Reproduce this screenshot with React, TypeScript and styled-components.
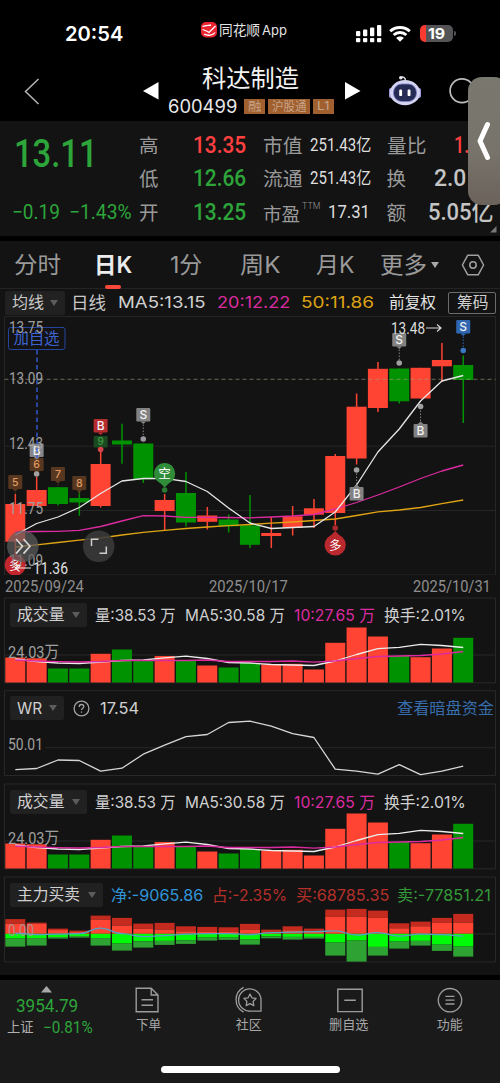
import React, { useLayoutEffect, useRef, useState } from "react";
import styled, { createGlobalStyle } from "styled-components";

const UI = `Inter, "Noto Sans CJK SC", sans-serif`;
const DIN = `Roboto, "Noto Sans CJK SC", sans-serif`;

const RED = "#ff4433";
const GREEN = "#009200";
const MAGENTA = "#dc2ba0";
const YELLOW = "#dfa413";
const DOWN = "#2da53a";

const GlobalStyle = createGlobalStyle`
  * { box-sizing: border-box; }
  body { margin: 0; background: #000; font-family: ${UI}; }
`;

/* ---------- text fitted to a column width ---------- */

type TextStyle = { $size: number; $color?: string; $weight?: number; $din?: boolean };

const FitBox = styled.span<{ $w: number; $ml?: number; $dy?: number }>`
  flex: none;
  display: block;
  line-height: 0;
  width: ${(p) => p.$w}px;
  margin-left: ${(p) => p.$ml ?? 0}px;
  margin-top: ${(p) => p.$dy ?? 1.5}px;
`;

const FitInner = styled.span<TextStyle>`
  display: inline-block;
  vertical-align: top;
  white-space: nowrap;
  line-height: 1.2;
  transform-origin: 0 50%;
  font-family: ${(p) => (p.$din ? DIN : UI)};
  font-size: ${(p) => p.$size}px;
  font-weight: ${(p) => p.$weight ?? 400};
  color: ${(p) => p.$color ?? "#d0d0d0"};
`;

type FitProps = {
  w: number;
  size: number;
  ml?: number;
  dy?: number;
  color?: string;
  weight?: number;
  din?: boolean;
  children: React.ReactNode;
};

function Fit({ w, size, ml, dy, color, weight, din, children }: FitProps) {
  const ref = useRef<HTMLSpanElement>(null);
  const [scale, setScale] = useState(1);
  useLayoutEffect(() => {
    if (ref.current && ref.current.offsetWidth) {
      setScale(w / ref.current.offsetWidth);
    }
  }, [w, size, children]);
  return (
    <FitBox $w={w} $ml={ml} $dy={dy}>
      <FitInner
        ref={ref}
        $size={size}
        $color={color}
        $weight={weight}
        $din={din}
        style={{ transform: `scaleX(${scale})` }}
      >
        {children}
      </FitInner>
    </FitBox>
  );
}

/* ---------- page parts ---------- */

const Screen = styled.div`
  position: relative;
  width: 500px;
  height: 1083px;
  overflow: hidden;
  display: flex;
  flex-direction: column;
  background: #000;
`;

const StatusBar = styled.header`
  flex: none;
  height: 60px;
  display: flex;
  align-items: flex-start;
  padding-top: 20px;
`;

const Glyph = styled.svg<{ $ml?: number; $mt?: number }>`
  flex: none;
  display: block;
  margin-left: ${(p) => p.$ml ?? 0}px;
  margin-top: ${(p) => p.$mt ?? 0}px;
`;

const Battery = styled.div`
  flex: none;
  width: 33px;
  height: 17px;
  margin: 5px 0 0 9px;
  border-radius: 5px;
  background: linear-gradient(90deg, #fb3a30 0 6.5px, #545456 6.5px);
  display: flex;
  align-items: center;
  position: relative;
  &::after {
    content: "";
    position: absolute;
    right: -3px;
    top: 6px;
    width: 2px;
    height: 5px;
    border-radius: 0 2px 2px 0;
    background: #545456;
  }
`;

const TitleBar = styled.div`
  flex: none;
  height: 61px;
  display: flex;
  align-items: flex-start;
`;

const TitleBlock = styled.div`
  flex: none;
  width: 168px;
  margin-left: 9px;
  display: flex;
  flex-direction: column;
`;

const CodeLine = styled.div`
  display: flex;
  align-items: center;
  height: 21px;
  margin-top: 3px;
`;

const Tag = styled.span<{ $ml: number }>`
  flex: none;
  height: 15px;
  margin-left: ${(p) => p.$ml}px;
  padding: 0 4px;
  background: #a05f2e;
  display: flex;
  align-items: center;
`;

const Quote = styled.section`
  flex: none;
  height: 115px;
  background: #131313;
  display: flex;
  padding-top: 7.5px;
`;

const PriceBlock = styled.div`
  flex: none;
  width: 139px;
  display: flex;
  flex-direction: column;
`;

const Row = styled.div<{ $h: number }>`
  flex: none;
  height: ${(p) => p.$h}px;
  display: flex;
  align-items: center;
`;

const QuoteColumn = styled.div<{ $w: number }>`
  flex: none;
  width: ${(p) => p.$w}px;
  display: flex;
  flex-direction: column;
`;

const QuoteCell = styled.div`
  height: 33.6px;
  display: flex;
  align-items: center;
`;

const Ttm = styled.span`
  width: 17px;
  margin: -13px 0 0 2px;
  font: 300 8.5px ${UI};
  color: #8e8e8e;
`;

const Tabs = styled.nav`
  flex: none;
  margin-top: 5px;
  height: 48px;
  background: #131313;
  border-bottom: 1px solid #242424;
  display: flex;
  align-items: center;
`;

const ActiveTab = styled.div`
  flex: none;
  height: 48px;
  margin-left: 33px;
  display: flex;
  flex-direction: column;
  align-items: center;
  justify-content: space-between;
  padding-top: 11px;
  &::after {
    content: "";
    width: 16px;
    height: 4px;
    border-radius: 2px;
    background: #f6493b;
  }
`;

const IndicatorRow = styled.div`
  flex: none;
  height: 27px;
  padding-left: 4.5px;
  background: #131313;
  display: flex;
  align-items: center;
`;

const Drop = styled.div<{ $w: number }>`
  flex: none;
  width: ${(p) => p.$w}px;
  height: 24px;
  padding: 0 7px;
  background: #212121;
  border-radius: 2px;
  display: flex;
  align-items: center;
  justify-content: space-between;
`;

const Caret = styled.i<{ $c?: string; $ml?: number }>`
  flex: none;
  margin-left: ${(p) => p.$ml ?? 0}px;
  border: 4px solid transparent;
  border-top: 6px solid ${(p) => p.$c ?? "#5c5c5c"};
  border-bottom: 0;
`;

const ChipButton = styled.div`
  flex: none;
  width: 48px;
  height: 22px;
  margin-left: 11px;
  border: 1px solid #6b6b6b;
  border-radius: 2px;
  display: flex;
  align-items: center;
  padding-left: 8px;
`;

const ChartArea = styled.div`
  flex: none;
  height: 259px;
  background: #131313;
`;

const Plot = styled.svg`
  display: block;
  overflow: visible;
`;

const Dates = styled.div`
  flex: none;
  height: 21.5px;
  padding: 0 9.5px 0 5px;
  background: #131313;
  display: flex;
  align-items: center;
  justify-content: space-between;
`;

const Panels = styled.div`
  flex: none;
  height: 378px;
  background: #131313;
  display: flex;
  flex-direction: column;
  gap: 7.3px;
`;

const Panel = styled.section`
  flex: none;
  height: 86px;
  display: grid;
  > * {
    grid-area: 1 / 1;
  }
`;

const PanelHead = styled.div`
  height: 37px;
  padding-left: 10px;
  display: flex;
  align-items: center;
`;

const BottomBar = styled.footer`
  flex: none;
  height: 104px;
  margin-top: 5px;
  background: #1a1a1a;
  display: flex;
  flex-direction: column;
  align-items: center;
  justify-content: space-between;
  padding-bottom: 11px;
`;

const BottomItems = styled.div`
  width: 500px;
  display: flex;
`;

const IndexBlock = styled.div`
  flex: none;
  width: 98px;
  padding-top: 6px;
`;

const NavItem = styled.div`
  flex: none;
  width: 100.5px;
  padding-top: 6px;
  display: flex;
  flex-direction: column;
  align-items: center;
  gap: 3px;
`;

const HomeBar = styled.div`
  width: 179px;
  height: 7px;
  border-radius: 4px;
  background: #fff;
`;

const SideHandle = styled.div`
  position: absolute;
  left: 468px;
  top: 77px;
  width: 40px;
  height: 128px;
  border-radius: 14px;
  background: linear-gradient(#79786f, #77736a 60%, #6b625b);
  display: flex;
  align-items: center;
  padding-left: 8px;
`;

/* ---------- chart data ---------- */

const X0 = 15.3;
const STEP = 21.33;
const cx = (i: number) => X0 + STEP * i;

// [rising, body top, body bottom, high, low]
const candles: [number, number, number, number, number][] = [
  [1, 504, 541.7, 494, 560],
  [1, 490, 506, 477, 506],
  [0, 487.2, 504, 487, 505.5],
  [0, 498, 502.5, 492, 515.7],
  [1, 464, 506, 452, 507.5],
  [0, 440.5, 444.5, 423.7, 463.7],
  [0, 443.5, 479.3, 443.5, 483],
  [1, 500, 511, 494, 530],
  [0, 493, 522.5, 472, 526.5],
  [1, 515.5, 521.8, 507, 529.5],
  [0, 519.5, 526.3, 514.5, 532.5],
  [0, 525.3, 544.8, 495, 548],
  [1, 533, 536, 517, 548],
  [1, 516.3, 527.7, 506, 535.5],
  [1, 508.3, 514.7, 499, 528],
  [1, 456, 513, 454, 525],
  [1, 406.7, 458.5, 393.5, 464.5],
  [1, 368.8, 408, 362, 412],
  [0, 368.5, 401.3, 368.5, 403.5],
  [1, 367.8, 398.5, 367.8, 398.5],
  [1, 360, 366.3, 343, 382],
  [0, 365, 380, 355.5, 423],
];

const ma5 = [535, 523.5, 517, 507.5, 493.5, 481, 478.5, 478.3, 481.5, 491.5, 508, 523, 528.5, 527.5, 526.5, 512, 485, 452, 429, 401, 381, 375.5];
const ma20 = [532, 531.5, 531.3, 530.3, 526.5, 521, 515.6, 516, 517.3, 517.3, 517.5, 517.8, 517, 516, 514.5, 509, 502.5, 495, 487, 478.5, 471, 465];
const ma50 = [547, 544.8, 542.5, 540.2, 538, 535, 532.3, 530.3, 528.5, 527, 525.7, 524.5, 523.2, 522, 520.5, 519, 515.5, 511.8, 510, 507.5, 503.7, 500];

const volTop = [657, 657.8, 668, 668, 653.3, 649, 660, 655.5, 660.3, 665, 667, 662.5, 664, 663.3, 669, 642.3, 627, 636, 655.5, 656.7, 648, 637.3];
const volUp = [1, 1, 0, 0, 1, 0, 0, 1, 0, 1, 0, 0, 1, 1, 1, 1, 1, 1, 0, 1, 1, 0];
const volMa5 = [658.5, 661, 662.5, 663, 661.7, 660, 659.5, 657.3, 655.7, 658, 662, 662.5, 664, 664.5, 665, 660.5, 654, 648.2, 646.8, 643.8, 645, 647];
const volMa10 = [659.5, 660.5, 661.2, 661.5, 661, 660, 660, 660, 660, 659.5, 661, 661, 661, 660.5, 661.7, 660.5, 658, 656, 655.5, 655, 653.5, 651];
const wr = [769.5, 768.3, 759.8, 760.3, 771, 768, 754, 745, 736.5, 734.3, 722.3, 721, 726, 733.5, 737.3, 769, 771, 774, 764.5, 774.5, 771, 766];

// [dark red top, red top, bright green end, dark green end] around y = 934.3
const flow: [number, number, number, number][] = [
  [919.5, 924, 939, 947],
  [923, 924, 938.5, 946],
  [929, 930.5, 937.5, 939],
  [931, 932.5, 936.5, 938],
  [916, 920, 938.5, 946],
  [918.3, 926, 944, 951],
  [924, 929, 941.7, 948],
  [923.3, 930, 941.3, 945.3],
  [926.7, 931.7, 940.7, 944.3],
  [927.3, 932.3, 938, 941],
  [927.7, 932.3, 938, 940.3],
  [924.3, 930, 940, 945],
  [930, 932.7, 936.7, 938.7],
  [926.7, 930.7, 937.3, 940],
  [929, 931, 937.3, 939],
  [910, 917.3, 943, 956],
  [909.3, 917, 941, 962],
  [911, 918.3, 947.3, 956],
  [923.7, 928.7, 942, 949],
  [922, 926.7, 941.3, 946],
  [918.3, 923.3, 945, 951.3],
  [914.3, 923, 947, 957],
];
const net = [933.5, 935, 934.5, 934, 928.5, 934, 937, 936, 934.5, 934, 934, 935, 933, 932.5, 932, 931.3, 935.5, 933, 936.5, 934.5, 935, 936.5];

const pts = (v: number[]) => v.map((y, i) => `${cx(i)},${y}`).join(" ");

function smooth(v: number[]) {
  let d = `M${cx(0)},${v[0]}`;
  for (let i = 1; i < v.length; i++) {
    const m = (cx(i - 1) + cx(i)) / 2;
    d += ` C${m},${v[i - 1]} ${m},${v[i]} ${cx(i)},${v[i]}`;
  }
  return d;
}

type LabelProps = { x: number; y: number; w: number; size?: number; fill?: string; children: string };
const Label = ({ x, y, w, size = 16.5, fill = "#9f9f9f", children }: LabelProps) => (
  <text x={x} y={y} textLength={w} lengthAdjust="spacingAndGlyphs" fontFamily={DIN} fontSize={size} fill={fill}>
    {children}
  </text>
);

const Line = ({ v, c }: { v: number[]; c: string }) => (
  <polyline points={pts(v)} fill="none" stroke={c} strokeWidth="1.3" strokeLinejoin="round" />
);

type FlagProps = { i: number; y: number; dot: number; bg: string; t: string; color?: string; h?: number; size?: number };
function Flag({ i, y, dot, bg, t, color = "#f0f0f0", h = 13.5, size = 12 }: FlagProps) {
  const x = cx(i);
  const below = dot < y;
  const edge = below ? y : y + h;
  const tip = below ? y - 2.5 : y + h + 2.5;
  return (
    <g>
      <line x1={x} x2={x} y1={edge} y2={dot} stroke={bg} strokeDasharray="1.5 1.5" />
      <rect x={x - 7} y={y} width="14" height={h} rx="1" fill={bg} />
      <path d={`M${x - 3} ${edge}H${x + 3}L${x} ${tip}Z`} fill={bg} />
      <text x={x} y={y + h / 2 + size * 0.36} textAnchor="middle" fontFamily={UI} fontSize={size} fontWeight="500" fill={color}>
        {t}
      </text>
    </g>
  );
}

function Pin({ x, y, up, bg, t }: { x: number; y: number; up: boolean; bg: string; t: string }) {
  const s = up ? -1 : 1;
  return (
    <g>
      <path d={`M${x - 7} ${y + 7 * s}L${x} ${y + 14 * s}L${x + 7} ${y + 7 * s}Z`} fill={bg} />
      <circle cx={x} cy={y} r="10.6" fill={bg} />
      <text x={x} y={y + 4.6} textAnchor="middle" fontFamily={UI} fontSize="12.5" fill="#fff">
        {t}
      </text>
    </g>
  );
}

const Dot = ({ x, y, c, r = 2.8 }: { x: number; y: number; c: string; r?: number }) => <circle cx={x} cy={y} r={r} fill={c} />;

function KChart() {
  return (
    <Plot width="500" height="259" viewBox="0 316 500 259">
      <g stroke="#262626" fill="none">
        <path d="M4.5 316.5H495.5V575H4.5Z M4.5 446.2H495.5 M4.5 510.5H495.5" />
      </g>
      {candles.map(([up, t, b, h, l], i) => (
        <g key={i} fill={up ? RED : GREEN}>
          <rect x={cx(i) - 0.7} y={h} width="1.5" height={l - h} />
          <rect x={cx(i) - 10} y={t} width="20" height={b - t} />
        </g>
      ))}
      <line x1="4.5" x2="495.5" y1="379.3" y2="379.3" stroke="#a39a80" strokeOpacity="0.62" strokeDasharray="4 3" />
      <Line v={ma50} c={YELLOW} />
      <Line v={ma20} c={MAGENTA} />
      <Line v={ma5} c="#e6e6e6" />

      <rect x="8.5" y="327.5" width="56.5" height="22" rx="2" fill="#131313" stroke="#27449c" />
      <text x="13.5" y="344.3" textLength="46" fontFamily={UI} fontSize="15.5" fill="#3d62d0">加自选</text>

      <Flag i={0} y={475} dot={494} bg="#57371f" t="5" color="#e09a60" h={14} size={10.5} />
      <Flag i={2} y={467} dot={486} bg="#57371f" t="7" color="#e09a60" h={14} size={10.5} />
      <Flag i={3} y={476} dot={495} bg="#57371f" t="8" color="#e09a60" h={14} size={10.5} />
      <Flag i={1} y={458} dot={474} bg="#57371f" t="6" color="#e09a60" h={13} size={10.5} />
      <Flag i={1} y={443.5} dot={458} bg="#85878c" t="B" />
      <Dot x={cx(1)} y={474} c="#a5a0a0" />
      <line x1="37" x2="37" y1="350" y2="458" stroke="#3763e8" strokeWidth="1.3" strokeDasharray="4.5 3" />
      <Flag i={4} y={436} dot={449.5} bg="#1c4a20" t="9" color="#3f9a45" h={11.5} size={10} />
      <Flag i={4} y={419} dot={434} bg="#b62b2e" t="B" />
      <Dot x={cx(4)} y={449.5} c="#d8434a" />
      <Flag i={6} y={408} dot={439} bg="#828282" t="S" />
      <Dot x={cx(6)} y={439} c="#9c98a0" />
      <Flag i={18} y={333} dot={363} bg="#828282" t="S" />
      <Dot x={cx(18)} y={363} c="#a0a0a0" />
      <Flag i={16} y={487} dot={470} bg="#828282" t="B" />
      <Dot x={cx(16)} y={470} c="#a0a0a0" />
      <Flag i={19} y={424} dot={406.5} bg="#828282" t="B" />
      <Dot x={cx(19)} y={406.5} c="#a0a0a0" />
      <Flag i={21} y={320} dot={350.5} bg="#2f67b2" t="S" />
      <Dot x={cx(21)} y={350.5} c="#3b78c4" />
      <Pin x={cx(7)} y={473.5} up={false} bg="#2f8c38" t="空" />
      <Dot x={cx(7)} y={490} c="#2b7a33" />
      <Pin x={cx(15)} y={545} up bg="#b9292d" t="多" />
      <Dot x={cx(15)} y={528} c="#a9282c" />
      <Pin x={cx(0)} y={565} up={false} bg="#c3262c" t="多" />

      <Label x={9} y={333} w={34}>13.75</Label>
      <Label x={9} y={384.3} w={34}>13.09</Label>
      <Label x={9} y={449.3} w={34}>12.43</Label>
      <Label x={9} y={514.3} w={34}>11.75</Label>
      <Label x={9} y={565.5} w={34}>11.09</Label>
      <Label x={391} y={334} w={34} fill="#dedede">13.48</Label>
      <path d="M426 328H441M437 324.5L441 328L437 331.5" fill="none" stroke="#d8d8d8" strokeWidth="1.2" />
      <path d="M31 568H15M19.5 564.5L15.5 568L19.5 571.5" fill="none" stroke="#f0f0f0" strokeWidth="1.2" />
      <Label x={33} y={574} w={35} fill="#e0e0e0">11.36</Label>

      <circle cx="22.8" cy="546.3" r="15.8" fill="#5d5d5d" fillOpacity="0.72" />
      <path d="M16 539L22.5 546.3L16 553.6M23.5 539L30 546.3L23.5 553.6" fill="none" stroke="#dadada" strokeWidth="1.6" />
      <circle cx="98.7" cy="546.3" r="15.8" fill="#3a3a3a" fillOpacity="0.88" />
      <path d="M91.5 546V539.3H98.5M99.5 553.3H106.3V546.5" fill="none" stroke="#cfcfcf" strokeWidth="1.5" />
    </Plot>
  );
}

function VolumePlot() {
  return (
    <Plot width="500" height="86" viewBox="0 596.5 500 86">
      <path d="M4.5 597.5H495.5V682.3H4.5Z M4.5 654.5H495.5" stroke="#282828" fill="none" />
      {volTop.map((t, i) => (
        <rect key={i} x={cx(i) - 10} y={t} width="20" height={682 - t} fill={volUp[i] ? RED : GREEN} />
      ))}
      <Line v={volMa5} c="#ececec" />
      <Line v={volMa10} c={MAGENTA} />
      <Label x={8} y={657} w={51}>24.03万</Label>
    </Plot>
  );
}

function VolumePanel() {
  return (
    <Panel>
      <VolumePlot />
      <PanelHead>
        <Drop $w={77}>
          <Fit w={48} size={15.5}>成交量</Fit>
          <Caret />
        </Drop>
        <Fit ml={7.5} w={81} size={16}>量:38.53 万</Fit>
        <Fit ml={9.5} w={100} size={16}>MA5:30.58 万</Fit>
        <Fit ml={9} w={80.5} size={16} color={MAGENTA}>10:27.65 万</Fit>
        <Fit ml={9} w={82} size={16}>换手:2.01%</Fit>
      </PanelHead>
    </Panel>
  );
}

function WrPanel() {
  return (
    <Panel>
      <Plot width="500" height="86" viewBox="0 689.8 500 86">
        <path d="M4.5 690.5H495.5V775.3H4.5Z M45 747.5H495.5" stroke="#282828" fill="none" />
        <Label x={8} y={750} w={35}>50.01</Label>
        <Line v={wr} c="#d6d6d6" />
      </Plot>
      <PanelHead>
        <Drop $w={54}>
          <Fit w={25} size={16}>WR</Fit>
          <Caret />
        </Drop>
        <Glyph $ml={9} width="17" height="17" viewBox="0 0 17 17" fill="none" stroke="#a2a2a2" strokeWidth="1.3">
          <circle cx="8.5" cy="8.5" r="7.4" />
          <path d="M6.2 7C6.2 5.3 7.2 4.5 8.5 4.5S10.8 5.3 10.8 6.6C10.8 8.2 8.5 8.3 8.5 10.1M8.5 11.4V12.8" />
        </Glyph>
        <Fit ml={10} w={39} size={16}>17.54</Fit>
        <Fit ml={257.5} w={97} size={16} color="#386dab">查看暗盘资金</Fit>
      </PanelHead>
    </Panel>
  );
}

function FlowPanel() {
  const zero = 934.2;
  return (
    <Panel>
      <Plot width="500" height="86" viewBox="0 876.4 500 86">
        <path d="M4.5 877.5H495.5V962.3H4.5Z M4.5 934.3H495.5" stroke="#282828" fill="none" />
        {flow.map(([a, b, c, d], i) => {
          const x = cx(i) - 10;
          return (
            <g key={i}>
              <rect x={x} y={a} width="20" height={b - a} fill="#c52a1e" />
              <rect x={x} y={b} width="20" height={zero - b} fill={RED} />
              <rect x={x} y={zero} width="20" height={c - zero} fill="#00fb08" />
              <rect x={x} y={c} width="20" height={d - c} fill="#2fa234" />
            </g>
          );
        })}
        <path d={smooth(net)} fill="none" stroke="#55a0c8" strokeWidth="1.3" />
        <g opacity="0.8">
          <Label x={8} y={936.5} w={26}>0.00</Label>
        </g>
      </Plot>
      <PanelHead>
        <Drop $w={93}>
          <Fit w={63} size={15.5}>主力买卖</Fit>
          <Caret />
        </Drop>
        <Fit ml={7.5} w={92} size={16} color="#3095d8">净:-9065.86</Fit>
        <Fit ml={9} w={75.5} size={16} color="#b5302a">占:-2.35%</Fit>
        <Fit ml={8.5} w={93} size={16} color="#b5302a">买:68785.35</Fit>
        <Fit ml={8.5} w={94} size={16} color="#339a39">卖:-77851.21</Fit>
      </PanelHead>
    </Panel>
  );
}

export default function App() {
  const gray = "#9a9a9a";
  return (
    <Screen>
      <GlobalStyle />
      <StatusBar>
        <Fit ml={65} dy={2} w={58} size={20.5} weight={600} color="#fff">20:54</Fit>
        <Glyph $ml={78} $mt={1.5} width="16" height="16" viewBox="0 0 16 16">
          <rect width="16" height="15.5" rx="5" fill="#ea2531" />
          <path d="M1.5 4.5C4 3 8 3.5 10 3M1.5 7.5L5.5 9L8 10.5L14.5 4M3 12.2C7 14 12 13.5 14 10.5" fill="none" stroke="#fff" strokeWidth="1.3" />
        </Glyph>
        <Fit ml={2} dy={1.5} w={41} size={14} color="#e4e4e4">同花顺</Fit>
        <Fit ml={2} dy={2} w={25} size={13.5} color="#e4e4e4">App</Fit>
        <Glyph $ml={68.5} $mt={5} width="26" height="18" viewBox="0 0 26 18" fill="#fff">
          <rect x="0" y="6" width="4.3" height="5.3" rx="1" />
          <rect x="7" y="4.5" width="4.3" height="6.8" rx="1" />
          <rect x="14" y="2.5" width="4.3" height="8.8" rx="1" />
          <rect x="21" y="0" width="4.3" height="11.3" rx="1" />
          <rect x="0" y="13" width="4.3" height="4.2" rx="1" />
          <rect x="7" y="13" width="4.3" height="4.2" rx="1" />
          <rect x="14" y="13" width="4.3" height="4.2" rx="1" />
          <rect x="21" y="13" width="4.3" height="4.2" rx="1" />
        </Glyph>
        <Glyph $ml={7.5} $mt={5.5} width="22" height="16" viewBox="0 0 22 16">
          <path d="M1.2 5.3C6.5 0.3 15.5 0.3 20.8 5.3M4.7 9C8.2 5.6 13.8 5.6 17.3 9" fill="none" stroke="#fff" strokeWidth="2.9" />
          <path d="M11 15.8L7.2 11.9C9.3 10 12.7 10 14.8 11.9Z" fill="#fff" />
        </Glyph>
        <Battery>
          <Fit ml={8} dy={0} w={17} size={15} weight={700} color="#fff">19</Fit>
        </Battery>
      </StatusBar>

      <TitleBar>
        <Glyph $ml={24} $mt={18} width="16" height="28" viewBox="0 0 16 28">
          <path d="M14.5 1L1.5 13.5L14.5 26" fill="none" stroke="#b5b5b5" strokeWidth="1.5" />
        </Glyph>
        <Glyph $ml={103} $mt={22} width="16" height="18" viewBox="0 0 16 18">
          <path d="M0 9L15.5 0V17.5Z" fill="#fff" />
        </Glyph>
        <TitleBlock>
          <Fit ml={34} dy={4.5} w={97} size={24} color="#f2f2f2">科达制造</Fit>
          <CodeLine>
            <Fit w={69.5} dy={0.5} size={18} color="#e8e8e8">600499</Fit>
            <Tag $ml={6}><Fit dy={1} w={13.5} size={12} color="#c8a387">融</Fit></Tag>
            <Tag $ml={2.5}><Fit dy={1} w={34.5} size={12} color="#c8a387">沪股通</Fit></Tag>
            <Tag $ml={3}><Fit dy={0} w={13} size={11.5} color="#c8a387">L1</Fit></Tag>
          </CodeLine>
        </TitleBlock>
        <Glyph $ml={8.5} $mt={22} width="16" height="18" viewBox="0 0 16 18">
          <path d="M15.5 9L0 0V17.5Z" fill="#fff" />
        </Glyph>
        <Glyph $ml={27.5} $mt={15} width="34" height="32" viewBox="0 0 34 32">
          <path d="M13 3C14.5 1.2 17.5 2 17.5 6" fill="none" stroke="#dcdcea" strokeWidth="1.5" />
          <circle cx="12.8" cy="2.8" r="1.8" fill="#e4e4ee" />
          <rect x="1" y="13" width="4" height="10" rx="2" fill="#9a9bdc" />
          <rect x="29" y="13" width="4" height="10" rx="2" fill="#9a9bdc" />
          <ellipse cx="17" cy="17.7" rx="15" ry="12.6" fill="#d5d3f2" />
          <rect x="5.5" y="9" width="23" height="17.5" rx="8.2" fill="#252b55" stroke="#7f84c2" strokeWidth="0.8" />
          <rect x="11.2" y="14.5" width="2.9" height="6.6" rx="1.2" fill="#fff" />
          <rect x="19.6" y="14.5" width="2.9" height="6.6" rx="1.2" fill="#fff" />
        </Glyph>
        <Glyph $ml={27} $mt={18} width="26" height="26" viewBox="0 0 26 26">
          <circle cx="13" cy="12.8" r="11.9" fill="none" stroke="#bdbdbd" strokeWidth="1.7" />
        </Glyph>
      </TitleBar>

      <Quote>
        <PriceBlock>
          <Row $h={50}>
            <Fit ml={13.5} w={84} size={39} weight={500} din color={DOWN}>13.11</Fit>
          </Row>
          <Row $h={50}>
            <Fit ml={11.5} dy={17} w={47.5} size={20} din color={DOWN}>−0.19</Fit>
            <Fit ml={10} dy={17} w={62.5} size={20} din color={DOWN}>−1.43%</Fit>
          </Row>
        </PriceBlock>
        <QuoteColumn $w={124}>
          {[
            ["高", "13.35", "#ff4040"],
            ["低", "12.66", DOWN],
            ["开", "13.25", DOWN],
          ].map(([k, v, c]) => (
            <QuoteCell key={k}>
              <Fit dy={2.5} w={20} size={19.5} color={gray}>{k}</Fit>
              <Fit dy={0} ml={34} w={53} size={24} weight={500} din color={c}>{v}</Fit>
            </QuoteCell>
          ))}
        </QuoteColumn>
        <QuoteColumn $w={123.5}>
          <QuoteCell>
            <Fit dy={2.5} w={39.5} size={19.5} color={gray}>市值</Fit>
            <Fit dy={0} ml={7} w={61} size={17.5} din color="#dedede">251.43亿</Fit>
          </QuoteCell>
          <QuoteCell>
            <Fit dy={2.5} w={39.5} size={19.5} color={gray}>流通</Fit>
            <Fit dy={0} ml={7} w={61} size={17.5} din color="#dedede">251.43亿</Fit>
          </QuoteCell>
          <QuoteCell>
            <Fit dy={2.5} w={37} size={18.5} color={gray}>市盈</Fit>
            <Ttm>TTM</Ttm>
            <Fit dy={0} ml={9} w={41.5} size={18.5} din color="#dedede">17.31</Fit>
          </QuoteCell>
        </QuoteColumn>
        <QuoteColumn $w={113}>
          <QuoteCell>
            <Fit dy={2.5} w={39.5} size={19.5} color={gray}>量比</Fit>
            <Fit dy={0} ml={27.5} w={15} size={24} din weight={500} color="#ff4040">1.</Fit>
          </QuoteCell>
          <QuoteCell>
            <Fit dy={2.5} w={20} size={19.5} color={gray}>换</Fit>
            <Fit dy={0} ml={27.5} w={62} size={24} din weight={500} color="#c4c4c4">2.01%</Fit>
          </QuoteCell>
          <QuoteCell>
            <Fit dy={2.5} w={20} size={19.5} color={gray}>额</Fit>
            <Fit dy={0} ml={21.5} w={66} size={24} din weight={500} color="#c4c4c4">5.05亿</Fit>
            <Glyph $ml={-4} $mt={35} width="7" height="7" viewBox="0 0 7 7">
              <path d="M0 6.5L6.5 0V6.5Z" fill="#777" />
            </Glyph>
          </QuoteCell>
        </QuoteColumn>
      </Quote>

      <Tabs>
        <Fit ml={14} dy={3} w={47} size={23} color={gray}>分时</Fit>
        <ActiveTab>
          <Fit w={38} dy={0} size={23} weight={600} color="#ececec">日K</Fit>
        </ActiveTab>
        <Fit ml={38} dy={3} w={32} size={23} color={gray}>1分</Fit>
        <Fit ml={38} dy={3} w={40} size={23} color={gray}>周K</Fit>
        <Fit ml={36} dy={3} w={38} size={23} color={gray}>月K</Fit>
        <Fit ml={25.5} dy={3} w={47} size={23} color={gray}>更多</Fit>
        <Caret $c="#a8a8a8" $ml={4} />
        <Glyph $ml={22} width="24" height="22" viewBox="0 0 24 22" fill="none" stroke="#a0a0a0" strokeWidth="1.5">
          <path d="M6.8 1.2H17.2L22.6 11L17.2 20.8H6.8L1.4 11Z" strokeLinejoin="round" />
          <circle cx="12" cy="11" r="3.2" />
        </Glyph>
      </Tabs>

      <IndicatorRow>
        <Drop $w={60.5}>
          <Fit w={32} size={15.5} color="#c8c8c8">均线</Fit>
          <Caret />
        </Drop>
        <Fit ml={6} w={35} size={17} color="#c8c8c8">日线</Fit>
        <Fit ml={12} w={88} size={16.5} color="#d0d0d0">MA5:13.15</Fit>
        <Fit ml={11} w={73.5} size={16.5} color={MAGENTA}>20:12.22</Fit>
        <Fit ml={10.5} w={72.5} size={16.5} color={YELLOW}>50:11.86</Fit>
        <Fit ml={15.5} w={47.5} size={15.5} color="#e4e4e4">前复权</Fit>
        <ChipButton>
          <Fit w={31.5} size={15.5} color="#d0d0d0">筹码</Fit>
        </ChipButton>
      </IndicatorRow>

      <ChartArea>
        <KChart />
      </ChartArea>
      <Dates>
        <Fit w={79} size={16.5} din color="#8e8e8e">2025/09/24</Fit>
        <Fit w={79} size={16.5} din color="#8e8e8e">2025/10/17</Fit>
        <Fit w={78} size={16.5} din color="#8e8e8e">2025/10/31</Fit>
      </Dates>

      <Panels>
        <VolumePanel />
        <WrPanel />
        <VolumePanel />
        <FlowPanel />
      </Panels>

      <BottomBar>
        <BottomItems>
          <IndexBlock>
            <Row $h={8}>
              <Glyph $ml={41} width="11" height="7" viewBox="0 0 11 7">
                <path d="M0 6.5L5.5 0L11 6.5Z" fill="#a8a8a8" />
              </Glyph>
            </Row>
            <Row $h={24}>
              <Fit ml={16} w={62} size={18.5} din color={DOWN}>3954.79</Fit>
            </Row>
            <Row $h={18}>
              <Fit ml={7} w={26.5} size={13.5} color="#b0b0b0">上证</Fit>
              <Fit ml={9.5} w={49.5} size={16} din color={DOWN}>−0.81%</Fit>
            </Row>
          </IndexBlock>
          <NavItem>
            <Glyph $ml={-3} width="28" height="28" viewBox="0 0 28 28" fill="none" stroke="#9c9c9c" strokeWidth="1.4">
              <path d="M3.2 2.2H18.2L25 9V25.8H3.2ZM18.2 2.2V9H25M8.5 13.8H20M8.5 19.2H20" />
            </Glyph>
            <Fit dy={0} w={25} size={13} color="#a6a6a6">下单</Fit>
          </NavItem>
          <NavItem>
            <Glyph width="28" height="28" viewBox="0 0 28 28" fill="none" stroke="#9c9c9c" strokeWidth="1.3">
              <path d="M26 25.2H15.5A11.2 11.2 0 1 1 26 13.9Z" />
              <path d="M8.6 1.4C-1.4 6.5 -1.4 21 8.6 26.2" />
              <path d="M15 8L16.9 11.8L21.1 12.4L18.1 15.4L18.8 19.6L15 17.6L11.2 19.6L11.9 15.4L8.9 12.4L13.1 11.8Z" strokeLinejoin="round" />
            </Glyph>
            <Fit dy={0} w={26} size={13} color="#a6a6a6">社区</Fit>
          </NavItem>
          <NavItem>
            <Glyph $ml={1} width="28" height="28" viewBox="0 0 28 28" fill="none" stroke="#9c9c9c" strokeWidth="1.4">
              <path d="M1.8 3.2H26.2V25.6H1.8ZM8.3 14.3H19.8" />
            </Glyph>
            <Fit dy={0} ml={-1} w={39.5} size={13} color="#a6a6a6">删自选</Fit>
          </NavItem>
          <NavItem>
            <Glyph width="28" height="28" viewBox="0 0 28 28" fill="none" stroke="#9c9c9c" strokeWidth="1.3">
              <circle cx="14" cy="14.2" r="11.7" />
              <path d="M9.5 10.4H18.5M9.5 14.2H18.5M9.5 18H18.5" />
            </Glyph>
            <Fit dy={0} w={26} size={13} color="#a6a6a6">功能</Fit>
          </NavItem>
        </BottomItems>
        <HomeBar />
      </BottomBar>

      <SideHandle>
        <Glyph width="16" height="40" viewBox="0 0 16 40">
          <path d="M11.5 3.5L4 20L11.5 36.5" fill="none" stroke="#fff" strokeWidth="5" strokeLinecap="round" strokeLinejoin="round" />
        </Glyph>
      </SideHandle>
    </Screen>
  );
}
